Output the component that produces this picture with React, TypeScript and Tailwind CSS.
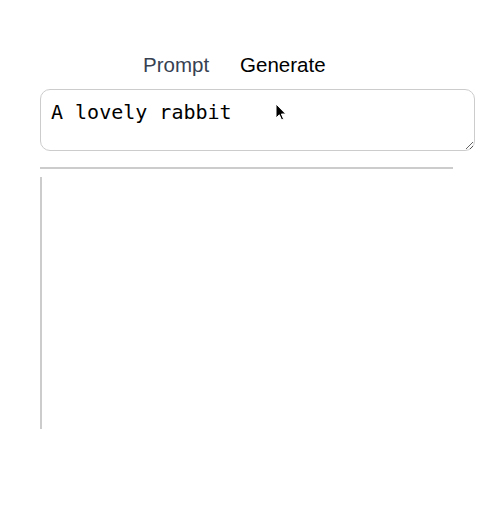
import React from "react";

export default function App() {
  return (
    <div className="relative w-[492px] h-[508px] bg-white pl-[40px] pt-[51px]" style={{ fontFamily: '"Liberation Sans", Arial, sans-serif' }}>
      <div className="flex h-[28px] items-center pl-[103px] text-[20.5px] leading-[28px]">
        <span className="text-[#374151]">Prompt</span>
        <span className="ml-[31px] text-black">Generate</span>
      </div>
      <textarea
        className="mt-[10px] block w-[435px] h-[62px] rounded-[10px] border border-[#cccccc] px-[10px] py-[10px] text-[20px] leading-[24px] text-black outline-none"
        style={{ fontFamily: '"DejaVu Sans Mono", monospace' }}
        defaultValue="A lovely rabbit"
      />
      <div className="mt-[16px] h-[2px] w-[413px] bg-[#cccccc]" />
      <div className="mt-[8px] h-[252px] w-[2px] bg-[#cccccc]" />
      <svg
        className="absolute left-[275px] top-[103px]"
        width="13"
        height="19"
        viewBox="0 0 13 19"
      >
        <path
          d="M1 1 L1 15 L4.3 11.8 L6.6 17 L8.6 16.1 L6.4 11 L10.8 11 Z"
          fill="#000"
          stroke="#fff"
          strokeWidth="1"
          strokeLinejoin="round"
        />
      </svg>
    </div>
  );
}
